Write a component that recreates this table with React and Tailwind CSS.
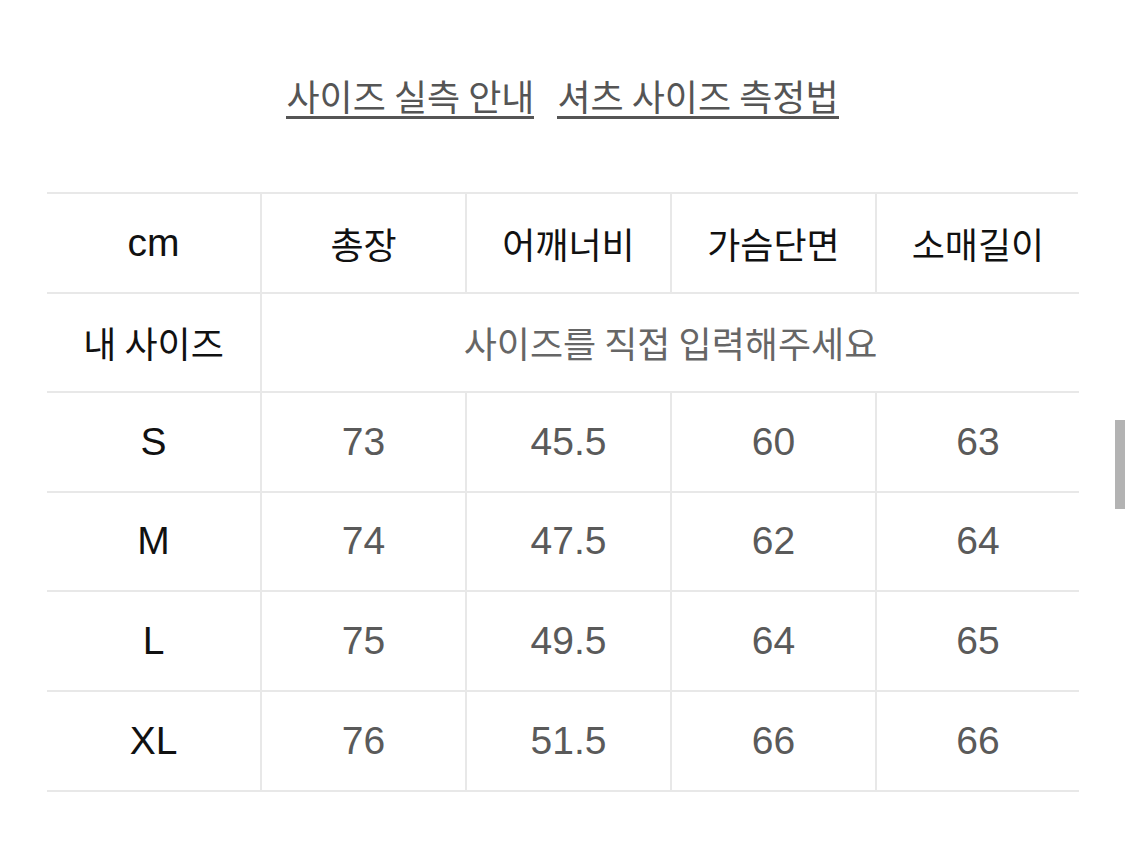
import React from "react";

const KR = { fontFamily: '"Noto Sans CJK KR", "Liberation Sans", sans-serif' };
const LAT = { fontFamily: '"Liberation Sans", "Noto Sans CJK KR", sans-serif' };

const headers = ["총장", "어깨너비", "가슴단면", "소매길이"];
const rows = [
  ["S", "73", "45.5", "60", "63"],
  ["M", "74", "47.5", "62", "64"],
  ["L", "75", "49.5", "64", "65"],
  ["XL", "76", "51.5", "66", "66"],
];

function Cell({ children, first, kr, dark, className = "" }) {
  return (
    <div
      className={`flex h-[99.6px] items-center justify-center border-b-2 border-[#e8e8e8] ${
        first ? "" : "border-l-2"
      } ${kr ? "text-[36px]" : "text-[39px]"} ${dark ? "text-[#111]" : "text-[#5a5a5a]"} ${className}`}
      style={kr ? KR : LAT}
    >
      {children}
    </div>
  );
}

export default function App() {
  return (
    <div className="relative h-[852px] w-[1125px] overflow-hidden bg-white">
      <div className="flex justify-center gap-[23px] pt-[75px]" style={KR}>
        <span className="border-b-[3px] border-[#555] pb-[1px] text-[36px] leading-[40px] text-[#555]">
          사이즈 실측 안내
        </span>
        <span className="border-b-[3px] border-[#555] pb-[1px] text-[36px] leading-[40px] text-[#555]">
          셔츠 사이즈 측정법
        </span>
      </div>

      <div className="mx-[47px] mt-[73px] grid grid-cols-[213px_205px_205px_205px_204px] border-t-2 border-[#e8e8e8]">
        <Cell first dark>cm</Cell>
        {headers.map((h) => (
          <Cell key={h} kr dark>
            {h}
          </Cell>
        ))}

        <Cell first kr dark>내 사이즈</Cell>
        <Cell kr className="col-span-4 text-[#666]">
          사이즈를 직접 입력해주세요
        </Cell>

        {rows.map((r) =>
          r.map((v, i) => (
            <Cell key={r[0] + i} first={i === 0} dark={i === 0}>
              {v}
            </Cell>
          ))
        )}
      </div>

      <div className="absolute right-0 top-[420px] h-[89px] w-[10px] bg-[#b3b3b3]" />
    </div>
  );
}
